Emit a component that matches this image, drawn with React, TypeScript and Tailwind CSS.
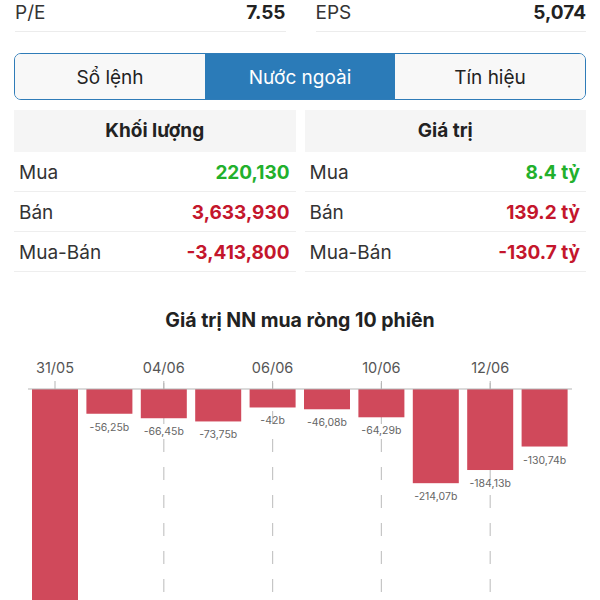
const font = { fontFamily: "Inter, 'Noto Sans', 'Liberation Sans', sans-serif" };

const volume = [
  { label: "Mua", value: "220,130", tone: "text-[#22b02c]" },
  { label: "Bán", value: "3,633,930", tone: "text-[#c4162c]" },
  { label: "Mua-Bán", value: "-3,413,800", tone: "text-[#c4162c]" },
];

const amount = [
  { label: "Mua", value: "8.4 tỷ", tone: "text-[#22b02c]" },
  { label: "Bán", value: "139.2 tỷ", tone: "text-[#c4162c]" },
  { label: "Mua-Bán", value: "-130.7 tỷ", tone: "text-[#c4162c]" },
];

// net foreign value, billions
const sessions = [
  { v: 560, label: "" },
  { v: 56.25, label: "-56,25b" },
  { v: 66.45, label: "-66,45b" },
  { v: 73.75, label: "-73,75b" },
  { v: 42, label: "-42b" },
  { v: 46.08, label: "-46,08b" },
  { v: 64.29, label: "-64,29b" },
  { v: 214.07, label: "-214,07b" },
  { v: 184.13, label: "-184,13b" },
  { v: 130.74, label: "-130,74b" },
];

const dates = [
  { i: 0, text: "31/05" },
  { i: 2, text: "04/06" },
  { i: 4, text: "06/06" },
  { i: 6, text: "10/06" },
  { i: 8, text: "12/06" },
];

function Stat({ label, value }: { label: string; value: string }) {
  return (
    <div className="flex h-[32px] items-start justify-between border-b border-[#ececec] text-[19px] leading-[26px]">
      <span className="text-[#333]">{label}</span>
      <span className="font-bold text-[#222]">{value}</span>
    </div>
  );
}

function DataTable({ title, rows }: { title: string; rows: typeof volume }) {
  return (
    <div>
      <div className="flex h-[42px] items-center justify-center bg-[#f5f5f5] text-[19px] font-bold text-[#222]">
        {title}
      </div>
      {rows.map((r) => (
        <div
          key={r.label}
          className="flex h-[40px] items-center justify-between border-b border-[#eeeeee] pl-[5px] pr-[6px] pt-[4px] text-[19px]"
        >
          <span className="text-[#333]">{r.label}</span>
          <span className={`font-bold ${r.tone}`}>{r.value}</span>
        </div>
      ))}
    </div>
  );
}

function Chart() {
  const top = 345;
  const axis = 389 - top;
  const scale = 0.44;
  const x0 = 32;
  const step = 54.4;
  const w = 46;
  const center = (i: number) => x0 + i * step + w / 2;

  return (
    <svg width="600" height="255" className="block" style={font}>
      {dates.map((d) =>
        d.i === 0 ? null : (
          <line
            key={"g" + d.i}
            x1={center(d.i)}
            x2={center(d.i)}
            y1={383 - top}
            y2={255}
            stroke="#c6c6c6"
            strokeWidth="1.2"
            strokeDasharray="13 15"
          />
        )
      )}
      {dates.map((d) => (
        <g key={d.text}>
          <text x={center(d.i)} y={373 - top} textAnchor="middle" fontSize="14.5" fill="#555">
            {d.text}
          </text>
          <line x1={center(d.i)} x2={center(d.i)} y1={381 - top} y2={axis} stroke="#b5b5b5" />
        </g>
      ))}
      {sessions.map((s, i) => {
        const h = s.v * scale;
        const x = x0 + i * step;
        return (
          <g key={i}>
            <rect x={x} y={axis} width={w} height={h} fill="#d0495b" />
            {s.label && (
              <text x={x + w / 2} y={axis + h + 17} textAnchor="middle" fontSize="10.5" fill="#666">
                {s.label}
              </text>
            )}
          </g>
        );
      })}
      <line x1="28" x2="572" y1={axis} y2={axis} stroke="#b5b5b5" strokeWidth="1.2" />
    </svg>
  );
}

export default function App() {
  return (
    <main className="h-[600px] w-[600px] overflow-hidden bg-white" style={font}>
      <div className="px-[14px]">
        <div className="grid grid-cols-2 gap-[30px] pl-[1px]">
          <Stat label="P/E" value="7.55" />
          <Stat label="EPS" value="5,074" />
        </div>

        <div className="mt-[21px] grid h-[47px] grid-cols-3 overflow-hidden rounded-[7px] border-[1.5px] border-[#2f7cb8] text-[19px]">
          <div className="flex items-center justify-center bg-[#f8f8f8] pt-[3px] text-[#222]">Sổ lệnh</div>
          <div className="flex items-center justify-center bg-[#2b7bb8] pt-[3px] text-white">Nước ngoài</div>
          <div className="flex items-center justify-center bg-[#f8f8f8] pt-[3px] text-[#222]">Tín hiệu</div>
        </div>

        <div className="mt-[10px] grid grid-cols-2 gap-[9px]">
          <DataTable title="Khối lượng" rows={volume} />
          <DataTable title="Giá trị" rows={amount} />
        </div>
      </div>

      <h2 className="mt-[34px] text-center text-[19.5px] font-bold leading-[28px] text-[#222]">
        Giá trị NN mua ròng 10 phiên
      </h2>
      <div className="mt-[11px]">
        <Chart />
      </div>
    </main>
  );
}
